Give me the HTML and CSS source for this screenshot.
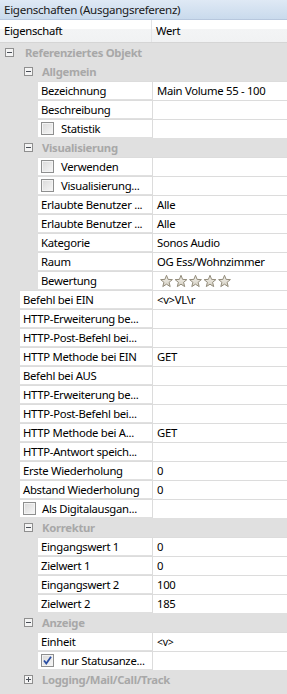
FILE: index.html
```html
<!DOCTYPE html>
<html lang="de">
<head>
<meta charset="utf-8">
<title>Eigenschaften</title>
<link rel="stylesheet" href="styles.css">
</head>
<body>
<div class="panel">
  <div class="title">Eigenschaften (Ausgangsreferenz)</div>
  <div class="head">
    <div class="hname">Eigenschaft</div>
    <div class="hval">Wert</div>
  </div>
  <div class="grid">
    <div class="row cat l0"><svg class="exp" viewBox="0 0 9 9"><rect x="0.5" y="0.5" width="8" height="8" class="exp-box"/><path d="M2 4.5h5" class="exp-sign"/></svg><span class="cat-label">Referenziertes Objekt</span></div>

    <div class="row cat l1"><svg class="exp" viewBox="0 0 9 9"><rect x="0.5" y="0.5" width="8" height="8" class="exp-box"/><path d="M2 4.5h5" class="exp-sign"/></svg><span class="cat-label">Allgemein</span></div>
    <div class="row prop l1"><div class="name">Bezeichnung</div><div class="val">Main Volume 55 - 100</div></div>
    <div class="row prop l1"><div class="name">Beschreibung</div><div class="val"></div></div>
    <div class="row prop l1"><div class="name"><span class="cb"></span>Statistik</div><div class="val"></div></div>

    <div class="row cat l1"><svg class="exp" viewBox="0 0 9 9"><rect x="0.5" y="0.5" width="8" height="8" class="exp-box"/><path d="M2 4.5h5" class="exp-sign"/></svg><span class="cat-label">Visualisierung</span></div>
    <div class="row prop l1"><div class="name"><span class="cb"></span>Verwenden</div><div class="val"></div></div>
    <div class="row prop l1"><div class="name"><span class="cb"></span>Visualisierung...</div><div class="val"></div></div>
    <div class="row prop l1"><div class="name">Erlaubte Benutzer ...</div><div class="val">Alle</div></div>
    <div class="row prop l1"><div class="name">Erlaubte Benutzer ...</div><div class="val">Alle</div></div>
    <div class="row prop l1"><div class="name">Kategorie</div><div class="val">Sonos Audio</div></div>
    <div class="row prop l1"><div class="name">Raum</div><div class="val">OG Ess/Wohnzimmer</div></div>
    <div class="row prop l1"><div class="name">Bewertung</div><div class="val">
      <svg class="stars" viewBox="0 0 74 14">
        <defs>
          <linearGradient id="sg" x1="0" y1="0" x2="0" y2="1">
            <stop offset="0" stop-color="#f4f2ec"/>
            <stop offset="1" stop-color="#d6d1c4"/>
          </linearGradient>
          <polygon id="st" points="6.5,0.8 8.1,4.9 12.4,5.1 9.1,7.8 10.2,12.1 6.5,9.7 2.8,12.1 3.9,7.8 0.6,5.1 4.9,4.9"/>
        </defs>
        <use href="#st" x="0" y="0.5" class="star"/>
        <use href="#st" x="14.5" y="0.5" class="star"/>
        <use href="#st" x="29" y="0.5" class="star"/>
        <use href="#st" x="43.5" y="0.5" class="star"/>
        <use href="#st" x="58" y="0.5" class="star"/>
      </svg>
    </div></div>

    <div class="row prop l0"><div class="name">Befehl bei EIN</div><div class="val">&lt;v&gt;VL\r</div></div>
    <div class="row prop l0"><div class="name">HTTP-Erweiterung be...</div><div class="val"></div></div>
    <div class="row prop l0"><div class="name">HTTP-Post-Befehl bei...</div><div class="val"></div></div>
    <div class="row prop l0"><div class="name">HTTP Methode bei EIN</div><div class="val">GET</div></div>
    <div class="row prop l0"><div class="name">Befehl bei AUS</div><div class="val"></div></div>
    <div class="row prop l0"><div class="name">HTTP-Erweiterung be...</div><div class="val"></div></div>
    <div class="row prop l0"><div class="name">HTTP-Post-Befehl bei...</div><div class="val"></div></div>
    <div class="row prop l0"><div class="name">HTTP Methode bei A...</div><div class="val">GET</div></div>
    <div class="row prop l0"><div class="name">HTTP-Antwort speich...</div><div class="val"></div></div>
    <div class="row prop l0"><div class="name">Erste Wiederholung</div><div class="val">0</div></div>
    <div class="row prop l0"><div class="name">Abstand Wiederholung</div><div class="val">0</div></div>
    <div class="row prop l0"><div class="name"><span class="cb"></span>Als Digitalausgan...</div><div class="val"></div></div>

    <div class="row cat l1"><svg class="exp" viewBox="0 0 9 9"><rect x="0.5" y="0.5" width="8" height="8" class="exp-box"/><path d="M2 4.5h5" class="exp-sign"/></svg><span class="cat-label">Korrektur</span></div>
    <div class="row prop l1"><div class="name">Eingangswert 1</div><div class="val">0</div></div>
    <div class="row prop l1"><div class="name">Zielwert 1</div><div class="val">0</div></div>
    <div class="row prop l1"><div class="name">Eingangswert 2</div><div class="val">100</div></div>
    <div class="row prop l1"><div class="name">Zielwert 2</div><div class="val">185</div></div>

    <div class="row cat l1"><svg class="exp" viewBox="0 0 9 9"><rect x="0.5" y="0.5" width="8" height="8" class="exp-box"/><path d="M2 4.5h5" class="exp-sign"/></svg><span class="cat-label">Anzeige</span></div>
    <div class="row prop l1"><div class="name">Einheit</div><div class="val small">&lt;v&gt;</div></div>
    <div class="row prop l1"><div class="name"><span class="cb checked"><svg viewBox="0 0 13 13"><path d="M3 6.5l2.3 3L10 2.8" class="tick"/></svg></span>nur Statusanze...</div><div class="val"></div></div>

    <div class="row cat l1"><svg class="exp" viewBox="0 0 9 9"><rect x="0.5" y="0.5" width="8" height="8" class="exp-box"/><path d="M2 4.5h5M4.5 2v5" class="exp-sign"/></svg><span class="cat-label">Logging/Mail/Call/Track</span></div>
  </div>
</div>
</body>
</html>
```

FILE: styles.css
```css
html, body {
  margin: 0;
  padding: 0;
  background: #e0e0e0;
}

.panel {
  width: 287px;
  font-family: "Noto Sans", "Open Sans", sans-serif;
  font-size: 11.3px;
  letter-spacing: -0.3px;
  color: #000;
  background: #e0e0e0;
}

.title {
  height: 19px;
  line-height: 19px;
  padding-left: 4px;
  background: linear-gradient(#dfe9f5, #c9daec);
  border-bottom: 1px solid #b7c7dd;
  color: #1a1a1a;
  white-space: nowrap;
  overflow: hidden;
  font-size: 11.6px;
}

.head {
  display: flex;
  height: 22px;
  background: linear-gradient(#ffffff 0, #ffffff 42%, #f3f4f5 42%, #f1f2f3 100%);
  border-bottom: 1px solid #d5d5d5;
}

.hname {
  width: 152px;
  box-sizing: border-box;
  padding-left: 4px;
  line-height: 22px;
  border-right: 1px solid #e3e4e6;
}

.hval {
  flex: 1;
  padding-left: 4px;
  line-height: 22px;
}

.grid {
  display: flex;
  flex-direction: column;
}

.row {
  display: flex;
  height: 19px;
  align-items: stretch;
}

.cat {
  align-items: center;
  background: #e0e0e0;
}

.exp {
  width: 9px;
  height: 9px;
  flex: 0 0 9px;
}

.exp-box {
  fill: #f4f4f4;
  stroke: #8f8f8f;
  stroke-width: 1;
}

.exp-sign {
  stroke: #4a4f58;
  stroke-width: 1;
}

.cat.l0 .exp { margin-left: 5px; }
.cat.l0 .cat-label { margin-left: 11px; }
.cat.l1 .exp { margin-left: 24px; }
.cat.l1 .cat-label { margin-left: 9px; }

.cat-label {
  font-weight: bold;
  color: #a8a8a8;
  white-space: nowrap;
}

.prop .name,
.prop .val {
  background: #fff;
  border-top: 1px solid #dcdcdc;
  height: 18px;
  line-height: 18px;
  white-space: nowrap;
  overflow: hidden;
  display: flex;
  align-items: center;
}

.prop.l0 .name {
  margin-left: 20px;
  width: 132px;
  padding-left: 3px;
  box-sizing: border-box;
}

.prop.l1 .name {
  margin-left: 38px;
  width: 114px;
  padding-left: 3px;
  box-sizing: border-box;
}

.prop .val {
  flex: 1;
  border-left: 1px solid #dcdcdc;
  padding-left: 4px;
}

.cb {
  width: 13px;
  height: 13px;
  flex: 0 0 13px;
  box-sizing: border-box;
  border: 1px solid #8e8f8f;
  background: linear-gradient(135deg, #d9d9d9, #f7f7f7);
  box-shadow: inset 0 0 0 1px #f3f3f3;
  margin-right: 7px;
  position: relative;
}

.prop.l0 .cb { margin-right: 6px; }

.cb.checked svg {
  position: absolute;
  left: -1px;
  top: -1px;
  width: 13px;
  height: 13px;
}

.tick {
  fill: none;
  stroke: #2a4ea3;
  stroke-width: 1.8;
}

.stars {
  width: 74px;
  height: 14px;
  margin-left: 3px;
}

.star {
  fill: url(#sg);
  stroke: #938c7b;
  stroke-width: 1;
}

.val.small {
  font-size: 10.5px;
}
```
